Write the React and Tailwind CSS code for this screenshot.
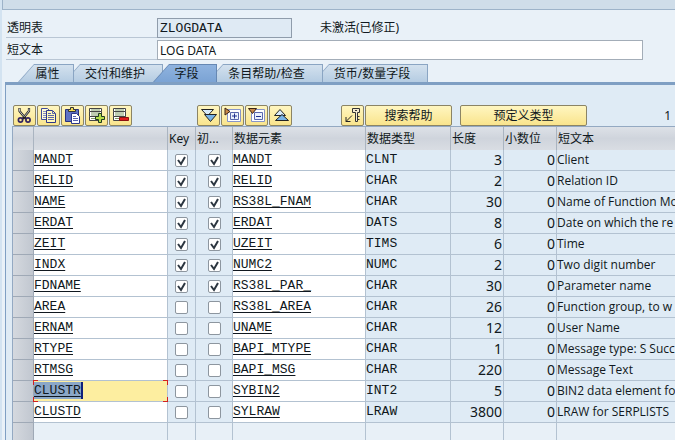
import clsx from "clsx";

const tabs = [
  { label: "属性", style: "z-5 w-[56px]" },
  { label: "交付和维护", style: "z-4 -ml-2.5 w-[99px]" },
  { label: "字段", style: "z-6 -ml-2.5 w-[64px]", active: true },
  { label: "条目帮助/检查", style: "z-3 -ml-2.5 w-[116px]" },
  { label: "货币/数量字段", style: "z-2 -ml-2.5 w-[115px]" },
];

const rows = [
  { name: "MANDT", key: true, element: "MANDT", type: "CLNT", length: 3, text: "Client" },
  { name: "RELID", key: true, element: "RELID", type: "CHAR", length: 2, text: "Relation ID" },
  { name: "NAME", key: true, element: "RS38L_FNAM", type: "CHAR", length: 30, text: "Name of Function Mo" },
  { name: "ERDAT", key: true, element: "ERDAT", type: "DATS", length: 8, text: "Date on which the re" },
  { name: "ZEIT", key: true, element: "UZEIT", type: "TIMS", length: 6, text: "Time" },
  { name: "INDX", key: true, element: "NUMC2", type: "NUMC", length: 2, text: "Two digit number" },
  { name: "FDNAME", key: true, element: "RS38L_PAR_", type: "CHAR", length: 30, text: "Parameter name" },
  { name: "AREA", element: "RS38L_AREA", type: "CHAR", length: 26, text: "Function group, to w" },
  { name: "ERNAM", element: "UNAME", type: "CHAR", length: 12, text: "User Name" },
  { name: "RTYPE", element: "BAPI_MTYPE", type: "CHAR", length: 1, text: "Message type: S Succ" },
  { name: "RTMSG", element: "BAPI_MSG", type: "CHAR", length: 220, text: "Message Text" },
  { name: "CLUSTR", element: "SYBIN2", type: "INT2", length: 5, text: "BIN2 data element fo", selected: true },
  { name: "CLUSTD", element: "SYLRAW", type: "LRAW", length: 3800, text: "LRAW for SERPLISTS" },
];

const columns = [
  { label: "", width: "w-[21px]" },
  { label: "", width: "w-[134px]" },
  { label: "Key", width: "w-[28px]" },
  { label: "初...", width: "w-[37px]" },
  { label: "数据元素", width: "w-[133px]" },
  { label: "数据类型", width: "w-[85px]" },
  { label: "长度", width: "w-[53px]" },
  { label: "小数位", width: "w-[53px]" },
  { label: "短文本", width: "" },
];

function Icon({ children }) {
  return (
    <svg width="17" height="17" viewBox="0 0 17 17" fill="none" stroke="#222" aria-hidden="true">
      {children}
    </svg>
  );
}

const CutIcon = () => (
  <Icon>
    <path d="M3.500 1v3l6.500 8M13 1v3l-6.500 8" stroke="#222" strokeWidth="2.2" />
    <path d="M3.500 1.500v2.500l4.500 5.500M13 1.500v2.500l-4.500 5.500" stroke="#e8e8e8" strokeWidth=".8" />
    <circle cx="4.500" cy="13" r="2.100" stroke="#33245f" strokeWidth="1.700" />
    <circle cx="12" cy="13" r="2.100" stroke="#33245f" strokeWidth="1.700" />
  </Icon>
);

const CopyIcon = () => (
  <Icon>
    <path d="M1.500 1.500h6l3 3v8h-9z" fill="#fffbd6" stroke="#3f4a9a" />
    <path d="M3 4.500h4M3 6.500h3M3 8.500h3M3 10.500h3" stroke="#8189c4" />
    <path d="M6.500 3.500h6l3 3v9h-9z" fill="#fff7b8" stroke="#2d3789" />
    <path d="M12.500 3.500v3h3M8 6.500h3M8 8.500h6M8 10.500h6M8 12.500h6" stroke="#5a63ab" />
  </Icon>
);

const PasteIcon = () => (
  <Icon>
    <path d="M1.500 2.500h13v12h-13z" fill="#5f72c4" stroke="#27307d" />
    <path d="M4.500 4.500v-2h2v-2h3v2h2v2z" fill="#f5dc52" stroke="#333" />
    <path d="M7.500 6.500h5l3 3v7h-8z" fill="#fff" stroke="#2d3789" />
    <path d="M9 9.500h3M9 11.500h5M9 13.500h5" stroke="#5963b0" />
  </Icon>
);

function RecordLines() {
  return (
    <>
      <path d="M1.500 1.500h12v3h-12zM1.500 9.500h12v4h-12z" fill="#fff" stroke="#444" />
      <path d="M1.500 4.500h12v5h-12z" fill="#fff" stroke="#444" />
      <path d="M3 3h9M3 6h9M3 8h9M3 11.500h6" stroke="#7f9a62" />
    </>
  );
}

const InsertIcon = () => (
  <Icon>
    <RecordLines />
    <path d="M10.500 6.500h3v3h3v3h-3v3h-3v-3h-3v-3h3z" fill="#b3dc4a" stroke="#1d3a20" />
  </Icon>
);

const DeleteIcon = () => (
  <Icon>
    <RecordLines />
    <path d="M7.500 10.500h9v3h-9z" fill="#e01b1b" stroke="#8d0f0f" />
  </Icon>
);

const ExpandAllIcon = () => (
  <Icon>
    <path d="M1.500 2.500h12l-6 6.500z" fill="#d8ebfa" />
    <path d="M4.500 7.500h12l-6 7z" fill="#79b4e8" />
  </Icon>
);

const ExpandIcon = () => (
  <Icon>
    <path d="M3.500 2.500h13v12h-13z" fill="#fff" stroke="#8794c8" />
    <path d="M6.500 5.500h8v7h-8z" fill="#eaf1fd" stroke="#5967ac" />
    <path d="M10.500 6.500v5M8 9h5" stroke="#1f2f8c" />
    <path d="M1 1v7l5-3.500z" fill="#c98a4b" stroke="#3b2415" />
  </Icon>
);

const CollapseIcon = () => (
  <Icon>
    <path d="M3.500 2.500h13v12h-13z" fill="#fff" stroke="#8794c8" />
    <path d="M6.500 5.500h8v7h-8z" fill="#eaf1fd" stroke="#5967ac" />
    <path d="M8 9.500h5" stroke="#1f2f8c" />
    <path d="M.5 1.500h8l-4 5z" fill="#c98a4b" stroke="#3b2415" />
  </Icon>
);

const CollapseAllIcon = () => (
  <Icon>
    <path d="M2.500 8.500h11l-5.500-6z" fill="#d8ebfa" />
    <path d="M3.500 13.500h13l-6.500-6z" fill="#79b4e8" />
  </Icon>
);

const KeyIcon = () => (
  <Icon>
    <path d="M8.500 1.500h7v4h-2v9h-2v-9h-3z" fill="#f4ead0" stroke="#333" />
    <path d="M13.500 9.500h2M13.500 12.500h2M11 3.500h2" stroke="#333" />
    <path d="M8 8.500l-6 6M2 10v4.500h4.500" />
  </Icon>
);

const editButtons = [
  { label: "剪切", icon: CutIcon },
  { label: "复制", icon: CopyIcon },
  { label: "粘贴", icon: PasteIcon },
  { label: "插入行", icon: InsertIcon },
  { label: "删除行", icon: DeleteIcon },
];

const viewButtons = [
  { label: "全部展开", icon: ExpandAllIcon },
  { label: "展开", icon: ExpandIcon },
  { label: "折叠", icon: CollapseIcon },
  { label: "全部折叠", icon: CollapseAllIcon },
];

function ToolButton({ label, children, className }) {
  return (
    <button
      type="button"
      aria-label={label}
      className={clsx(
        "flex h-[21px] shrink-0 items-center justify-center rounded-xs border border-[#8b8465] bg-linear-to-b from-[#fff6c0] to-[#f9e48c]",
        className
      )}
    >
      {children}
    </button>
  );
}

function IconGroup({ items }) {
  return (
    <div className="flex gap-px">
      {items.map(({ label, icon: Glyph }) => (
        <ToolButton key={label} label={label} className="w-[23px]">
          <Glyph />
        </ToolButton>
      ))}
    </div>
  );
}

function Tab({ label, style, active }) {
  return (
    <button
      type="button"
      role="tab"
      aria-selected={Boolean(active)}
      className={clsx(
        "relative h-[18px] shrink-0 pt-px pr-px [clip-path:polygon(16px_0,100%_0,100%_100%,0_100%)]",
        style,
        active ? "bg-[#6688b3]" : "bg-[#8aa5c3]"
      )}
    >
      <span
        className={clsx(
          "flex h-full items-center justify-center pl-1 whitespace-nowrap [clip-path:polygon(16px_0,100%_0,100%_100%,1px_100%)]",
          active
            ? "bg-linear-to-b from-[#8fb3df] to-[#7ba3d4]"
            : "bg-linear-to-b from-[#d3e1ee] to-[#b5cce2]"
        )}
      >
        {label}
      </span>
    </button>
  );
}

function Check({ checked, label }) {
  return (
    <span className="relative mx-auto block size-[13px]">
      <input
        type="checkbox"
        defaultChecked={checked}
        aria-label={label}
        className="peer block size-[13px] appearance-none rounded-xs border border-[#8d969f] bg-white"
      />
      <svg
        viewBox="0 0 13 13"
        className="pointer-events-none absolute inset-0 hidden peer-checked:block"
        fill="none"
        stroke="#2c3640"
        strokeWidth="2"
        aria-hidden="true"
      >
        <path d="M3 6l3 4 4-7" />
      </svg>
    </span>
  );
}

// red marks on the four corners of the focused cell
function FocusCorners() {
  return (
    <>
      <span className="absolute -top-px -left-px z-10 size-[5px] border-t border-l border-[#d22020]" />
      <span className="absolute -top-px -right-px z-10 size-[5px] border-t border-r border-[#d22020]" />
      <span className="absolute -bottom-px -left-px z-10 size-[5px] border-b border-l border-[#d22020]" />
      <span className="absolute -right-px -bottom-px z-10 size-[5px] border-r border-b border-[#d22020]" />
    </>
  );
}

const cell = "border-r border-b border-[#b3c2d1] p-0 last:border-r-0";
const mono = "font-['Liberation_Mono',monospace] text-[13px]";

function FieldTable() {
  return (
    <table className="w-full table-fixed border-separate border-spacing-0 border-t border-l border-[#94a9c2]">
      <colgroup>
        {columns.map((col, i) => (
          <col key={i} className={col.width} />
        ))}
      </colgroup>
      <thead>
        <tr className="h-[23px]">
          {columns.map((col, i) => (
            <th
              key={i}
              className="border-r border-[#aab4c0] bg-linear-to-b from-[#dde1e7] via-[#cfd4dc] to-[#d9dde3] p-0 pl-px text-left font-normal whitespace-nowrap last:border-r-0"
            >
              {col.label}
            </th>
          ))}
        </tr>
      </thead>
      <tbody className="leading-5">
        {rows.map((row) => (
          <tr key={row.name} className="h-[21px]">
            <td className="border-r border-b border-[#9fa9b6] bg-linear-to-r from-[#d5d9df] to-[#c1c7d0] p-0" />
            <td className={clsx(cell, mono, "relative", row.selected ? "bg-[#fdeea0]" : "bg-white")}>
              <a
                href={`#${row.name}`}
                className={clsx(
                  "underline underline-offset-2",
                  row.selected && "border-r-2 border-[#10207c] bg-[#8ba7c8] py-px"
                )}
              >
                {row.name}
              </a>
              {row.selected && <FocusCorners />}
            </td>
            <td className={cell}>
              <Check checked={row.key} label={`${row.name} Key`} />
            </td>
            <td className={cell}>
              <Check checked={row.key} label={`${row.name} 初始值`} />
            </td>
            <td className={clsx(cell, mono, "bg-white")}>
              <a href={`#${row.element}`} className="underline underline-offset-2">
                {row.element}
              </a>
            </td>
            <td className={clsx(cell, mono)}>{row.type}</td>
            <td className={clsx(cell, "pr-px text-right text-[14px]")}>{row.length}</td>
            <td className={clsx(cell, "pr-px text-right text-[14px]")}>0</td>
            <td className={clsx(cell, "font-['Open_Sans',sans-serif] whitespace-nowrap")}>{row.text}</td>
          </tr>
        ))}
        <tr className="h-[21px] bg-[#e8f0f7]">
          <td className="border-r border-[#9fa9b6] bg-linear-to-r from-[#d5d9df] to-[#c1c7d0] p-0" />
          {columns.slice(1).map((_, i) => (
            <td key={i} className="border-r border-[#b3c2d1] p-0 last:border-r-0" />
          ))}
        </tr>
      </tbody>
    </table>
  );
}

export default function App() {
  return (
    <div className="h-screen overflow-hidden border-l-2 border-[#d3e3f1] bg-[#e9f1f8] font-['Noto_Sans','Noto_Sans_CJK_SC',sans-serif] text-[12px] leading-4 text-[#101820]">
      <div className="h-[10px] border-b border-l border-[#9db3c9] bg-[#cfdde9]" />

      <div className="flex flex-col gap-0.5 pt-2 pl-1">
        <div className="flex h-5 items-center">
          <label htmlFor="table" className="flex h-full w-[151px] items-center border-b border-[#b9c6d4] pl-px">
            透明表
          </label>
          <input
            id="table"
            readOnly
            defaultValue="ZLOGDATA"
            className={clsx("h-5 w-[135px] border border-[#8f9cab] bg-[#dfeaf4] px-0.5", mono)}
          />
          <span className="pl-7">未激活(已修正)</span>
        </div>
        <div className="flex h-5 items-center pr-8">
          <label htmlFor="text" className="flex h-full w-[151px] shrink-0 items-center border-b border-[#b9c6d4] pl-px">
            短文本
          </label>
          <input
            id="text"
            defaultValue="LOG DATA"
            className="h-5 min-w-0 flex-1 border border-[#a3adb8] bg-white px-0.5"
          />
        </div>
      </div>

      <div role="tablist" className="isolate flex pt-1 pl-4">
        {tabs.map((tab) => (
          <Tab key={tab.label} {...tab} />
        ))}
      </div>

      <div className="ml-[3px] h-full border-t-3 border-l border-[#7f9fc3] bg-[#dfebf5] pt-5">
        <div className="flex items-center pr-1 pl-[7px]">
          <IconGroup items={editButtons} />
          <div className="w-[65px]" />
          <IconGroup items={viewButtons} />
          <div className="w-[49px]" />
          <ToolButton label="主键" className="w-[23px]">
            <KeyIcon />
          </ToolButton>
          <ToolButton label="搜索帮助" className="ml-px w-[87px]">
            搜索帮助
          </ToolButton>
          <ToolButton label="预定义类型" className="ml-2 w-[127px]">
            预定义类型
          </ToolButton>
          <span className="ml-auto">1</span>
        </div>
        <div className="pl-1.5">
          <FieldTable />
        </div>
      </div>
    </div>
  );
}
